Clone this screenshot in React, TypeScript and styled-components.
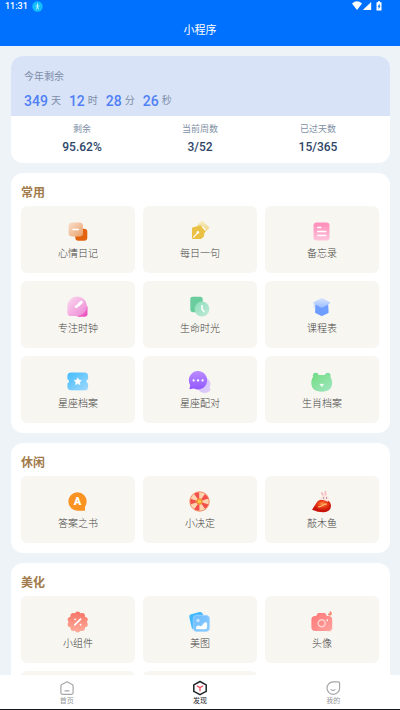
import React from "react";
import styled, { createGlobalStyle } from "styled-components";

const GlobalStyle = createGlobalStyle`
  * { box-sizing: border-box; }
  body {
    margin: 0;
    font-family: Roboto, "Noto Sans CJK SC", sans-serif;
    background: #eef3f8;
  }
  button { font: inherit; color: inherit; border: 0; padding: 0; cursor: pointer; }
  h1, h2, dl, dt, dd, p { margin: 0; font-weight: 400; }
`;

const Screen = styled.div`
  display: flex;
  flex-direction: column;
  height: 100vh;
  border-bottom: 1px solid #17181f;
`;

const Header = styled.header`
  flex: none;
  background: #0071ff;
  color: #fff;
`;

const StatusBar = styled.div`
  display: flex;
  align-items: center;
  justify-content: space-between;
  height: 12px;
  padding: 0 17px 0 5px;
`;

const StatusGroup = styled.div`
  display: flex;
  align-items: center;
  gap: 4px;
  font-size: 9px;
  font-weight: 500;
  line-height: 12px;
`;

const PageTitle = styled.h1`
  height: 34px;
  padding-top: 2px;
  text-align: center;
  font-size: 11px;
  line-height: 34px;
`;

const Content = styled.main`
  flex: 1;
  min-height: 0;
  display: flex;
  flex-direction: column;
  gap: 10px;
  padding: 10px 10px 0 11px;
  overflow-y: auto;
  scrollbar-width: none;
`;

const Card = styled.section`
  flex: none;
  border-radius: 12px;
  background: #fff;
  overflow: hidden;
`;

const Countdown = styled.div`
  height: 60px;
  padding: 12px 13px 0;
  background: #d8e3f7;
  color: #7d8da8;
  font-size: 10px;
  line-height: 18px;
`;

const CountdownRow = styled.div`
  display: flex;
  gap: 8px;
  margin-top: 6px;
`;

const Unit = styled.span`
  display: flex;
  align-items: center;
  gap: 3px;
`;

const Amount = styled.strong`
  color: #5080f4;
  font-size: 14px;
  font-weight: 500;
`;

const Stats = styled.dl`
  display: grid;
  grid-template-columns: repeat(3, 1fr);
  height: 47px;
  padding: 6px 13px 0 12px;
  text-align: center;
`;

const StatLabel = styled.dt`
  color: #8190a5;
  font-size: 9px;
  line-height: 15px;
`;

const StatValue = styled.dd`
  color: #2d4567;
  font-size: 12px;
  font-weight: 500;
  line-height: 20px;
`;

const GroupCard = styled(Card)`
  padding: 11px 11px 10px 10px;
`;

const GroupTitle = styled.h2`
  color: #a27b4c;
  font-size: 12px;
  font-weight: 700;
  line-height: 18px;
  margin-bottom: 4px;
`;

const Grid = styled.div`
  display: grid;
  grid-template-columns: repeat(3, 1fr);
  gap: 8px;
`;

const Tile = styled.button`
  display: flex;
  flex-direction: column;
  align-items: center;
  gap: 3px;
  height: 67px;
  padding-top: 15px;
  border-radius: 6px;
  background: #f7f6f1;
`;

const TileIcon = styled.svg`
  width: 22px;
  height: 22px;
  overflow: visible;
`;

const TileLabel = styled.span`
  color: #45443f;
  font-family: KaiTi, STKaiti, "Noto Sans CJK SC", sans-serif;
  font-size: 10px;
  font-weight: 300;
  line-height: 14px;
`;

const TabBar = styled.nav`
  flex: none;
  display: grid;
  grid-template-columns: repeat(3, 1fr);
  height: 34px;
  background: #fff;
`;

const Tab = styled.button<{ $active?: boolean }>`
  display: flex;
  flex-direction: column;
  align-items: center;
  justify-content: flex-end;
  gap: 1px;
  padding-bottom: 3px;
  background: none;
  color: ${(p) => (p.$active ? "#25262b" : "#96979b")};
  font-size: 7px;
  line-height: 9px;
`;

const TabIcon = styled.svg`
  width: 16px;
  height: 16px;
`;

const wheel = Array.from({ length: 10 }, (_, i) => {
  const a = ((i * 36 - 18) * Math.PI) / 180;
  const b = ((i * 36 + 18) * Math.PI) / 180;
  return `M10.5 10.5L${10.5 + 9.6 * Math.cos(a)} ${10.5 + 9.6 * Math.sin(a)}A9.6 9.6 0 0 1 ${10.5 + 9.6 * Math.cos(b)} ${10.5 + 9.6 * Math.sin(b)}Z`;
});

const badge = Array.from({ length: 10 }, (_, i) => {
  const t = (i * Math.PI) / 5;
  return { x: 10.7 + 7.8 * Math.sin(t), y: 11 - 7.8 * Math.cos(t) };
});

function Gradient({ id, from, to, vertical }: { id: string; from: string; to: string; vertical?: boolean }) {
  return (
    <linearGradient id={id} x1="0" y1="0" x2={vertical ? "0" : "1"} y2="1">
      <stop stopColor={from} />
      <stop offset="1" stopColor={to} />
    </linearGradient>
  );
}

const icons: Record<string, React.ReactNode> = {
  mood: (
    <>
      <defs><Gradient id="mood" from="#fae0cc" to="#e9a069" /></defs>
      <rect x="8.3" y="7.8" width="12" height="12" rx="3.2" fill="#e3640f" />
      <rect x="1.6" y="1.4" width="14.4" height="14.2" rx="3.6" fill="url(#mood)" />
      <path d="M6 8.6h5.4" stroke="#fff" strokeWidth="1.5" strokeLinecap="round" />
    </>
  ),
  pen: (
    <>
      <defs><Gradient id="pen" from="#f7eec2" to="#e9d07a" vertical /></defs>
      <path d="M13.4 0l6.6 6.6-4.6 4.8-7.2-6.8z" fill="url(#pen)" stroke="url(#pen)" strokeLinejoin="round" />
      <path d="M3.8 7.2l7.4-1.8 4 4-1.200 6-2.200 1.800H3.800z" fill="#eac144" stroke="#eac144" strokeWidth="1.600" strokeLinejoin="round" />
      <path d="M4.600 16.200l4-4.400M13.600 6l2.800 3" stroke="#fff" strokeWidth="1.100" strokeLinecap="round" />
      <circle cx="8.900" cy="11.400" r="1.300" fill="#fff" />
    </>
  ),
  memo: (
    <>
      <defs><Gradient id="memo" from="#ff8cba" to="#ffc4da" vertical /></defs>
      <rect x="2.5" y="1.5" width="16" height="18" rx="3" fill="url(#memo)" />
      <path d="M6.8 6.4h3M6.8 10.6h8M6.8 14.4h8" stroke="#fff" strokeWidth="1.5" strokeLinecap="round" />
    </>
  ),
  focus: (
    <>
      <defs><Gradient id="focus" from="#fbdcf0" to="#ed83d4" /></defs>
      <path d="M20.5 10v8.3a2.4 2.4 0 0 1-2.4 2.4H10z" fill="#ee58c3" />
      <path d="M.4 10.5a9.8 9.8 0 1 1 9.8 9.5H3a2.5 2.5 0 0 1-2.6-2.4z" fill="url(#focus)" />
      <path d="M11.6 8.8l2.800-2.600" stroke="#fff" strokeWidth="3" strokeLinecap="round" />
      <circle cx="9.4" cy="10.5" r="1.5" fill="#fff" />
    </>
  ),
  life: (
    <>
      <defs><Gradient id="life" from="#8bddb9" to="#c2ead9" /></defs>
      <rect x="1.3" y=".7" width="12.4" height="15.5" rx="2.4" fill="#69cd9d" />
      <circle cx="13" cy="13" r="7.4" fill="url(#life)" />
      <path d="M13 9.5v3.8l2 2.3" fill="none" stroke="#fff" strokeWidth="1.6" strokeLinecap="round" />
    </>
  ),
  course: (
    <>
      <defs><Gradient id="course" from="#d8e6ff" to="#9dbdfd" vertical /></defs>
      <path d="M4.800 8.500h12l.4 8.200-6.400 3-6.300-3z" fill="#6c9dff" stroke="#6c9dff" strokeWidth=".8" strokeLinejoin="round" />
      <path d="M2.5 6.2L9.3 2.4q1.4-.7 2.8 0L19 6.2q.5.5 0 1l-6.6 4q-1.6.8-3.2 0L2.500 7.200q-.5-.5 0-1z" fill="url(#course)" />
      <path d="M3.200 7.500v4" stroke="#c6d8ff" strokeWidth="1" strokeLinecap="round" />
    </>
  ),
  ticket: (
    <>
      <defs><Gradient id="ticket" from="#43bcff" to="#9fd8fb" /></defs>
      <path d="M4 20h15q3 0 2-3z" fill="#e6f1f4" />
      <path d="M4 1.4h13.5A3.6 3.6 0 0 1 21.1 5v3.3a2.1 2.1 0 0 0 0 4.1v3.2a3.6 3.6 0 0 1-3.6 3.6H4a3.6 3.6 0 0 1-3.6-3.6v-3.2a2.1 2.1 0 0 0 0-4.1V5A3.6 3.6 0 0 1 4 1.4z" fill="url(#ticket)" />
      <path d="M10.8 6.8l1.200 2.200 2.400.4-1.700 1.800.3 2.500-2.200-1.100-2.200 1.100.3-2.500-1.700-1.800 2.400-.4z" fill="#fff" stroke="#fff" strokeWidth=".5" />
    </>
  ),
  chat: (
    <>
      <defs><Gradient id="chat" from="#bb8cff" to="#9258ff" vertical /></defs>
      <path d="M13 6.2a7.2 7.2 0 0 1 7.5 10.5l1.2 2.3-1.4 1.2a7.5 7.5 0 0 1-12-4z" fill="#dbc8fb" />
      <path d="M9 0a9.200 9.200 0 1 1-4 17.500L.4 18.300 1.200 14A9.200 9.200 0 0 1 9 0z" fill="url(#chat)" />
      <path d="M4.600 9.400h.1M9 9.400h.1M13.500 9.400h.1" stroke="#fff" strokeWidth="2.200" strokeLinecap="round" />
    </>
  ),
  bear: (
    <>
      <defs><Gradient id="bear" from="#73dd83" to="#a2e6c2" /></defs>
      <circle cx="4.7" cy="4.6" r="2.8" fill="#73db91" />
      <circle cx="16.7" cy="4.6" r="2.8" fill="#80df9e" />
      <path d="M6 4h9.4c4 0 5.700 4.200 5.700 8 0 5.500-3.800 8.700-10.400 8.700S.3 17.500.3 12C.3 8.200 2 4 6 4z" fill="url(#bear)" />
      <path d="M8.900 13.200h3.700l-1.800 2.500z" fill="#fff" stroke="#fff" strokeWidth=".5" strokeLinejoin="round" />
    </>
  ),
  answer: (
    <>
      <path d="M10.5 1.3a9.200 9.200 0 0 1 9.200 9.200q0 3-1.700 5.400v3.800h-7.500a9.200 9.200 0 1 1 0-18.400z" fill="#fa9322" />
      <text x="10.5" y="14.4" textAnchor="middle" fontFamily="Roboto, sans-serif" fontSize="11" fontWeight="900" fill="#fff">A</text>
    </>
  ),
  wheel: (
    <>
      {wheel.map((d, i) => <path key={d} d={d} fill={i % 2 ? "#f25048" : "#ffd3ad"} />)}
      <circle cx="10.5" cy="10.5" r="9.7" fill="none" stroke="#f58a60" strokeWidth="1" />
      <circle cx="10.5" cy="10.5" r="3.2" fill="#f29231" />
      <circle cx="10.5" cy="10.5" r="1.8" fill="#f8cb4b" />
    </>
  ),
  fish: (
    <>
      <defs>
        <radialGradient id="fish" cx=".55" cy=".35"><stop stopColor="#ff9a43" /><stop offset=".45" stopColor="#ed431b" /><stop offset="1" stopColor="#c91409" /></radialGradient>
      </defs>
      <path d="M1 18.800l4.500-7q2-3.200 6.500-3.200 7 0 8 5.400.3 7-8 7.300Q7 21.300 1 18.800z" fill="url(#fish)" />
      <path d="M7 15.800q2 .6 4.200-1.200T16 13" fill="none" stroke="#ffd089" strokeWidth="1" />
      <path d="M12.500 5L10.800 2M14.500 4.500V.8" stroke="#f7bec1" strokeWidth="1.900" strokeLinecap="round" />
      <path d="M9 8.500q.8-4.500 5-4.500 4 .3 4 4.500l-1 2.200-4-1.500z" fill="#fbe5e3" />
      <path d="M12.500 7h.1M15.500 7h.1" stroke="#754747" strokeWidth="1" strokeLinecap="round" />
    </>
  ),
  widget: (
    <>
      <defs>
        <linearGradient id="widget" gradientUnits="userSpaceOnUse" x1="0" y1="1" x2="0" y2="21"><stop stopColor="#f57567" /><stop offset="1" stopColor="#ffac9b" /></linearGradient>
      </defs>
      <g fill="url(#widget)">
        <circle cx="10.7" cy="11" r="9.2" />
        {badge.map((p) => <circle key={p.x} cx={p.x} cy={p.y} r="2.6" />)}
      </g>
      <path d="M7.800 13.900l5.800-5.800M8 8.300h.1M13.500 13.700h.1" stroke="#fff" strokeWidth="1.700" strokeLinecap="round" />
    </>
  ),
  photo: (
    <>
      <defs><Gradient id="photo" from="#6ebcff" to="#8bcbff" /></defs>
      <path d="M2 3.200L10.500 1q2.500-.5 3.300 2L17 15 5 18.500q-1.800 0-2.300-1.800L.3 6Q0 4 2 3.200z" fill="#43b9fc" />
      <rect x="4.3" y="4.3" width="16.2" height="16.2" rx="3.5" fill="url(#photo)" stroke="#a9d9ff" strokeWidth=".7" />
      <circle cx="9" cy="9.5" r="1.7" fill="#c4e4ff" />
      <path d="M7 17.500q0-3.500 3-3 2 1.500 3.500-.5 1.500-3.200 4-2.500.6 0 .6 1V16q0 2.200-2.200 2.200H8q-1 0-1-.7z" fill="#fff" />
    </>
  ),
  camera: (
    <>
      <defs><Gradient id="camera" from="#ff7776" to="#ffa29e" /></defs>
      <path d="M16 21h3q3.500-1 3-5z" fill="#f9e7e1" />
      <path d="M7 2h7l2 3h1.500q3.700 0 3.700 3.700v7.500q0 3.800-3.800 3.800H4.200Q.4 20 .4 16.200V8.700Q.4 5 4.200 5H5z" fill="url(#camera)" />
      <circle cx="10.7" cy="12.2" r="3.5" fill="none" stroke="#ffd1ce" strokeWidth="1.5" />
      <path d="M16.300 9v.7" stroke="#fff" strokeWidth="1.300" strokeLinecap="round" />
      <path d="M19-.2q2.500 1.800 1.900 3.500-.6 1.500-2.300 1.400-2.200-.4-1.600-2.300l1.300.4z" fill="#fa8b72" />
    </>
  ),
};

const groups = [
  {
    title: "常用",
    items: [
      ["mood", "心情日记"], ["pen", "每日一句"], ["memo", "备忘录"],
      ["focus", "专注时钟"], ["life", "生命时光"], ["course", "课程表"],
      ["ticket", "星座档案"], ["chat", "星座配对"], ["bear", "生肖档案"],
    ],
  },
  { title: "休闲", items: [["answer", "答案之书"], ["wheel", "小决定"], ["fish", "敲木鱼"]] },
  { title: "美化", items: [["widget", "小组件"], ["photo", "美图"], ["camera", "头像"], ["", ""], ["", ""]] },
];

const countdown = [["349", "天"], ["12", "时"], ["28", "分"], ["26", "秒"]];
const stats = [["剩余", "95.62%"], ["当前周数", "3/52"], ["已过天数", "15/365"]];

export default function App() {
  return (
    <>
      <GlobalStyle />
      <Screen>
        <Header>
          <StatusBar>
            <StatusGroup>
              <span>11:31</span>
              <svg width="11" height="11" viewBox="0 0 11 11" aria-hidden="true">
                <circle cx="5.5" cy="5.5" r="5.2" fill="#12bdfb" />
                <path d="M5.5 2.8v3M4 5h3M5.500 5.500L4.600 8M5.500 5.500l.9 2.500" stroke="#b9f0ff" strokeWidth="1" strokeLinecap="round" />
              </svg>
            </StatusGroup>
            <svg width="31" height="12" viewBox="0 0 31 12" fill="#fff" aria-hidden="true">
              <path d="M0 3.400Q5-1 10 3.400L5 10z" />
              <path d="M19.200 2v8h-8.400z" />
              <path fillRule="evenodd" d="M26 1.200h2v1h1.500v8.400h-5V2.200H26zM27.600 3.500l-2 3.200h1v2.500l2-3.400h-1z" />
            </svg>
          </StatusBar>
          <PageTitle>小程序</PageTitle>
        </Header>
        <Content>
          <Card>
            <Countdown>
              <p>今年剩余</p>
              <CountdownRow>
                {countdown.map(([n, unit]) => (
                  <Unit key={unit}><Amount>{n}</Amount>{unit}</Unit>
                ))}
              </CountdownRow>
            </Countdown>
            <Stats>
              {stats.map(([label, value]) => (
                <div key={label}>
                  <StatLabel>{label}</StatLabel>
                  <StatValue>{value}</StatValue>
                </div>
              ))}
            </Stats>
          </Card>
          {groups.map((group) => (
            <GroupCard key={group.title}>
              <GroupTitle>{group.title}</GroupTitle>
              <Grid>
                {group.items.map(([icon, label], i) => (
                  <Tile key={i} type="button">
                    <TileIcon viewBox="0 0 22 22" aria-hidden="true">{icons[icon]}</TileIcon>
                    <TileLabel>{label}</TileLabel>
                  </Tile>
                ))}
              </Grid>
            </GroupCard>
          ))}
        </Content>
        <TabBar>
          <Tab type="button">
            <TabIcon viewBox="0 0 16 16" fill="none" stroke="#a5a6a9" strokeWidth="1.2" strokeLinejoin="round" strokeLinecap="round" aria-hidden="true">
              <path d="M8 1.800l5.200 2.700q.9.500.9 1.500v6.800q0 1.500-1.500 1.500H3.400q-1.500 0-1.500-1.500V6q0-1 .9-1.500zM6 10.900h4" />
            </TabIcon>
            首页
          </Tab>
          <Tab type="button" $active aria-current="page">
            <TabIcon viewBox="0 0 16 16" fill="none" strokeLinejoin="round" strokeLinecap="round" aria-hidden="true">
              <path d="M8 1.500l6.200 3.300v6.600L8 14.700l-6.200-3.300V4.800z" stroke="#222329" strokeWidth="1.500" />
              <path d="M5.300 6.200L8 7.600l2.700-1.400M8 7.600v3.200" stroke="#ef5361" strokeWidth="1.300" />
            </TabIcon>
            发现
          </Tab>
          <Tab type="button">
            <TabIcon viewBox="0 0 16 16" fill="none" stroke="#a5a6a9" strokeWidth="1.2" strokeLinejoin="round" strokeLinecap="round" aria-hidden="true">
              <path d="M8 1.800h5.200q1.400 0 1.400 1.400V8A6.300 6.300 0 1 1 8 1.800zM6 9.600q2 1.600 4 0" />
            </TabIcon>
            我的
          </Tab>
        </TabBar>
      </Screen>
    </>
  );
}
